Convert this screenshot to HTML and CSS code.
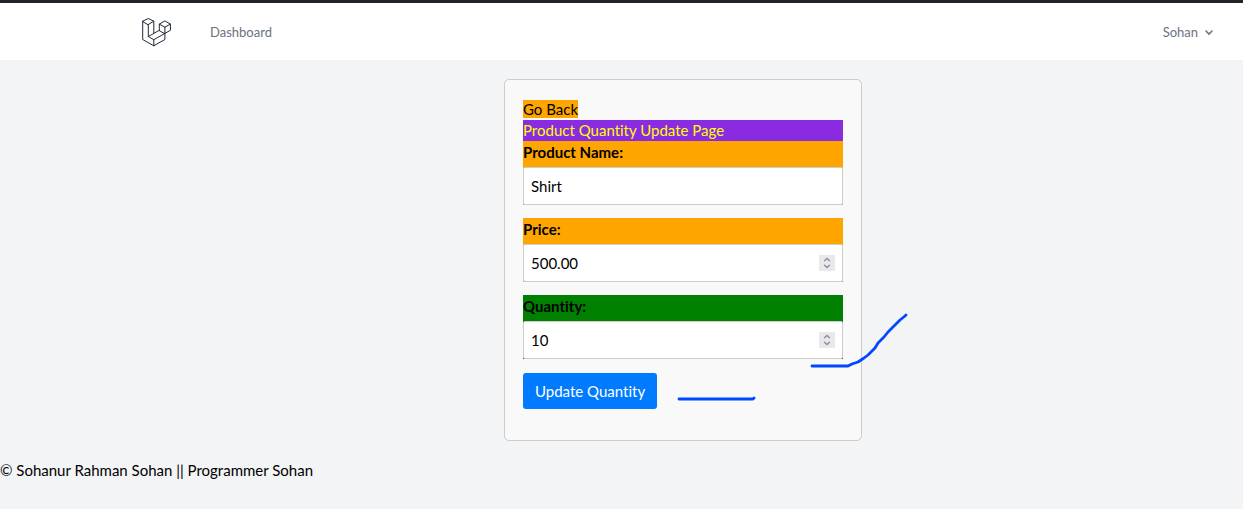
FILE: index.html
```html
<!DOCTYPE html>
<html lang="en">
<head>
<meta charset="utf-8">
<title>Product Quantity Update</title>
<link rel="stylesheet" href="styles.css">
</head>
<body>
<header class="navbar">
  <a class="logo" href="#" aria-label="Home">
    <svg width="29" height="29" viewBox="0 0 29 29" fill="none" stroke="#1f2937" stroke-width="1" stroke-linejoin="round" stroke-linecap="round">
      <path d="M.7 3.2 6.3.5l5.5 2.7-5.5 3.3zM.7 3.2v18.3l11.1 6.3 11.1-6.3V9.2M6.3 6.5v12l5.5 3.2v6.1M11.8 3.2v12.1M6.3 18.5l11-6.2M11.8 21.7l11.1-6.3M17.3 12.3V6.1l5.6-3.2 5.5 3.2v6.2l-5.5 3.1zM17.3 6.1l5.6 3.1 5.5-3.1"/>
    </svg>
  </a>
  <a class="nav-link" href="#">Dashboard</a>
  <button class="user-menu" type="button">Sohan
    <svg width="8" height="6" viewBox="0 0 8 6" fill="none" stroke="#6b7280" stroke-width="1.6" stroke-linecap="round"><path d="M1 1l3 3 3-3"/></svg>
  </button>
</header>
<main class="page">
  <form class="card">
    <a class="back" href="#">Go Back</a>
    <h1 class="title">Product Quantity Update Page</h1>
    <div class="field">
      <label for="name">Product Name:</label>
      <input id="name" type="text" value="Shirt">
    </div>
    <div class="field">
      <label for="price">Price:</label>
      <div class="number">
        <input id="price" type="text" inputmode="decimal" value="500.00">
        <svg class="spinner" width="16" height="16" viewBox="0 0 16 16" fill="none" stroke="#8f8f9d" stroke-width="1.4" stroke-linecap="round"><path d="M5.5 5.8 8 3.5l2.5 2.3M5.5 10.2 8 12.5l2.5-2.3"/></svg>
      </div>
    </div>
    <div class="field field-quantity">
      <label for="quantity">Quantity:</label>
      <div class="number">
        <input id="quantity" type="text" inputmode="numeric" value="10">
        <svg class="spinner" width="16" height="16" viewBox="0 0 16 16" fill="none" stroke="#8f8f9d" stroke-width="1.4" stroke-linecap="round"><path d="M5.5 5.8 8 3.5l2.5 2.3M5.5 10.2 8 12.5l2.5-2.3"/></svg>
      </div>
    </div>
    <button class="submit" type="submit">Update Quantity</button>
    <svg class="marks" width="232" height="90" viewBox="0 0 232 90" fill="none" stroke="#0047ff" stroke-width="2.8" stroke-linecap="round" stroke-linejoin="round">
      <path d="M3 87h74l1-1M136 54h36l4-2 6-2 6-4 4-3 7-7 3-5 6-6 4-5 12-12 5-4 1-1"/>
    </svg>
  </form>
</main>
<footer class="footer">© Sohanur Rahman Sohan || Programmer Sohan</footer>
</body>
</html>
```
FILE: styles.css
```css
* {
  box-sizing: border-box;
}

body {
  margin: 0;
  background: #f3f4f6;
  color: #000;
  font: 15px/21px Lato, sans-serif;
  font-variant-ligatures: none;
}

.navbar {
  display: flex;
  align-items: center;
  height: 60px;
  padding: 2px 30px 0 142px;
  border-top: 3px solid #26222b;
  background: #fff;
}

.logo {
  display: flex;
}

.nav-link {
  margin-left: 39px;
  color: #6b7280;
  font-size: 13px;
  text-decoration: none;
}

.user-menu {
  display: flex;
  align-items: center;
  gap: 7px;
  margin-left: auto;
  padding: 0;
  border: 0;
  background: none;
  color: #6b7280;
  font: inherit;
  font-size: 13px;
}

.page {
  display: flex;
  justify-content: center;
  padding: 19px 0 19px 123px;
}

.card {
  position: relative;
  width: 358px;
  padding: 20px 18px 31px;
  border: 1px solid #ccc;
  border-radius: 5px;
  background: #f9f9f9;
}

.back {
  display: table;
  margin-bottom: 2px;
  background: orange;
  color: #000;
  line-height: 18px;
  text-decoration: none;
}

.title {
  margin: 0;
  background: blueviolet;
  color: #ff0;
  font-size: 15px;
  font-weight: 400;
}

.field {
  margin-bottom: 13px;
  background: orange;
}

.field-quantity {
  margin-bottom: 14px;
  background: green;
}

.field label {
  display: block;
  padding-bottom: 4px;
  font-weight: 700;
  line-height: 22px;
}

.field input {
  display: block;
  width: 100%;
  height: 38px;
  padding: 7px;
  border: 1px solid #ccc;
  border-radius: 2px;
  background: #fff;
  color: #000;
  font: inherit;
}

.number {
  position: relative;
}

.spinner {
  position: absolute;
  top: 11px;
  right: 8px;
  background: #e9e9ed;
}

.submit {
  display: block;
  height: 36px;
  padding: 0 12px;
  border: 0;
  border-radius: 3px;
  background: #007bff;
  color: #fff;
  font: inherit;
}

.marks {
  position: absolute;
  right: -47px;
  bottom: 38px;
  pointer-events: none;
}
```
